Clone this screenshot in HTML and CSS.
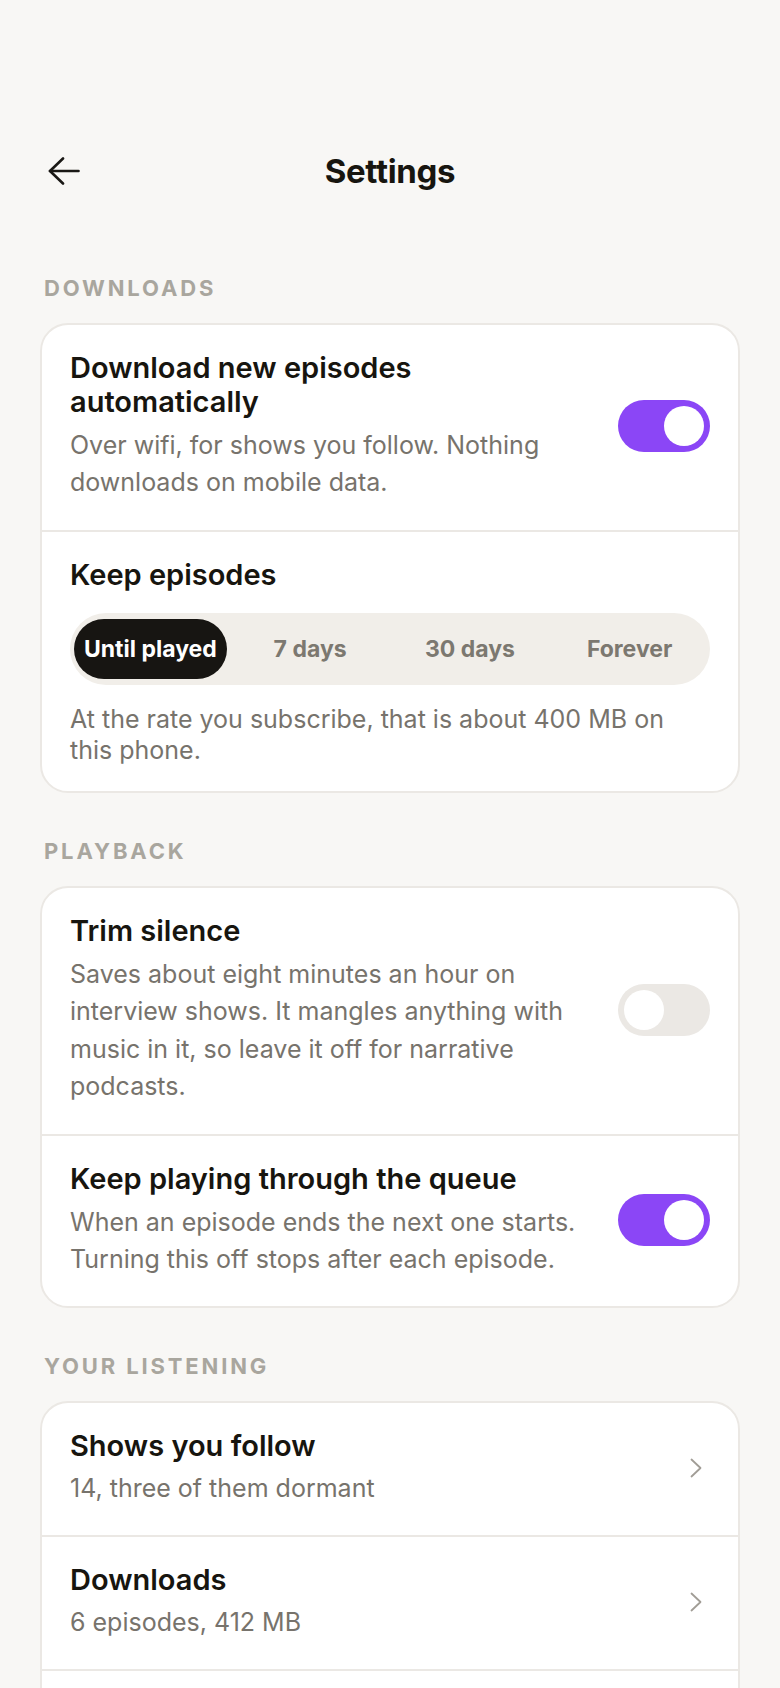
FILE: index.html
```html
<!DOCTYPE html>
<html lang="en">
<head>
<meta charset="utf-8">
<title>Settings</title>
<link rel="stylesheet" href="styles.css">
</head>
<body>
<div class="page">
  <header class="header">
    <button class="back" aria-label="Back">
      <svg width="32" height="28" viewBox="0 0 32 28" fill="none" stroke="currentColor" stroke-width="2.6" stroke-linecap="round" stroke-linejoin="round"><path d="M2 14H30.5"/><path d="M15 1.5L2 14l13 12.5"/></svg>
    </button>
    <h1 class="title">Settings</h1>
    <span></span>
  </header>

  <section class="section">
    <h2 class="section-label">Downloads</h2>
    <div class="card">
      <div class="row row-tall">
        <div class="row-text">
          <div class="row-title">Download new episodes automatically</div>
          <div class="row-desc">Over wifi, for shows you follow. Nothing downloads on mobile data.</div>
        </div>
        <div class="toggle on" role="switch" aria-checked="true"></div>
      </div>
      <div class="row row-stack">
        <div class="row-title">Keep episodes</div>
        <div class="seg">
          <div class="seg-item active">Until played</div>
          <div class="seg-item">7 days</div>
          <div class="seg-item">30 days</div>
          <div class="seg-item">Forever</div>
        </div>
        <p class="note">At the rate you subscribe, that is about 400 MB on this phone.</p>
      </div>
    </div>
  </section>

  <section class="section">
    <h2 class="section-label">Playback</h2>
    <div class="card">
      <div class="row row-tall">
        <div class="row-text">
          <div class="row-title">Trim silence</div>
          <div class="row-desc">Saves about eight minutes an hour on interview shows. It mangles anything with music in it, so leave it off for narrative podcasts.</div>
        </div>
        <div class="toggle" role="switch" aria-checked="false"></div>
      </div>
      <div class="row">
        <div class="row-text">
          <div class="row-title">Keep playing through the queue</div>
          <div class="row-desc">When an episode ends the next one starts. Turning this off stops after each episode.</div>
        </div>
        <div class="toggle on" role="switch" aria-checked="true"></div>
      </div>
    </div>
  </section>

  <section class="section">
    <h2 class="section-label">Your listening</h2>
    <div class="card">
      <div class="row">
        <div class="row-text">
          <div class="row-title">Shows you follow</div>
          <div class="row-desc">14, three of them dormant</div>
        </div>
        <svg class="chev" width="12" height="20" viewBox="0 0 12 20" fill="none" stroke="currentColor" stroke-width="1.8" stroke-linecap="round" stroke-linejoin="round"><path d="M1.5 1.5L10.5 10l-9 8.5"/></svg>
      </div>
      <div class="row">
        <div class="row-text">
          <div class="row-title">Downloads</div>
          <div class="row-desc">6 episodes, 412 MB</div>
        </div>
        <svg class="chev" width="12" height="20" viewBox="0 0 12 20" fill="none" stroke="currentColor" stroke-width="1.8" stroke-linecap="round" stroke-linejoin="round"><path d="M1.5 1.5L10.5 10l-9 8.5"/></svg>
      </div>
      <div class="row">
        <div class="row-text">
          <div class="row-title">Listening history</div>
          <div class="row-desc">Kept for 90 days</div>
        </div>
        <svg class="chev" width="12" height="20" viewBox="0 0 12 20" fill="none" stroke="currentColor" stroke-width="1.8" stroke-linecap="round" stroke-linejoin="round"><path d="M1.5 1.5L10.5 10l-9 8.5"/></svg>
      </div>
    </div>
  </section>
</div>
</body>
</html>
```

FILE: styles.css
```css
* { box-sizing: border-box; }

body {
  margin: 0;
  background: #f8f7f5;
  font-family: Inter, "Noto Sans", "Liberation Sans", sans-serif;
  color: #17150f;
}

.page {
  padding: 123px 40px 40px;
}

.header {
  display: grid;
  grid-template-columns: 48px 1fr 48px;
  align-items: center;
  height: 96px;
}

.back {
  width: 48px;
  height: 48px;
  display: flex;
  align-items: center;
  justify-content: center;
  border: 0;
  padding: 0;
  background: none;
  color: #1a1815;
}

.title {
  margin: 0;
  text-align: center;
  font-size: 33px;
  line-height: 40px;
  font-weight: 700;
  letter-spacing: -0.01em;
}

.section-label {
  margin: 44px 0 21px;
  padding-left: 4px;
  font-size: 22px;
  line-height: 28px;
  font-weight: 700;
  letter-spacing: 0.13em;
  text-transform: uppercase;
  color: #a9a69e;
}

.header + .section .section-label {
  margin-top: 55px;
}

.card {
  background: #fff;
  border: 2px solid #ebe8e4;
  border-radius: 28px;
  overflow: hidden;
}

.row {
  display: flex;
  align-items: center;
  gap: 32px;
  padding: 26px 28px 27px;
}

.row + .row {
  border-top: 2px solid #ebe8e4;
}

.row-tall {
  padding-bottom: 28.5px;
}

.row-stack {
  display: block;
  padding-bottom: 25px;
}

.row-text {
  flex: 1;
  min-width: 0;
}

.row-title {
  font-size: 29px;
  line-height: 34px;
  font-weight: 600;
}

.row-desc {
  margin-top: 7.5px;
  font-size: 25px;
  line-height: 37.5px;
  color: #77736c;
}

.toggle {
  flex: none;
  position: relative;
  width: 92px;
  height: 52px;
  border-radius: 26px;
  background: #ebe8e4;
}

.toggle::after {
  content: "";
  position: absolute;
  top: 6px;
  left: 6px;
  width: 40px;
  height: 40px;
  border-radius: 50%;
  background: #fff;
}

.toggle.on {
  background: #8b46f6;
}

.toggle.on::after {
  left: 46px;
}

.seg {
  display: flex;
  gap: 7px;
  margin-top: 21px;
  padding: 6px 4px;
  background: #f1eee9;
  border-radius: 36px;
}

.seg-item {
  flex: 1;
  height: 60px;
  display: flex;
  align-items: center;
  justify-content: center;
  border-radius: 30px;
  font-size: 23px;
  font-weight: 700;
  color: #7c7870;
}

.seg-item.active {
  background: #171512;
  color: #fff;
}

.note {
  margin: 19px 0 0;
  max-width: 620px;
  font-size: 25px;
  line-height: 31px;
  color: #77736c;
}

.chev {
  flex: none;
  margin-right: 8px;
  color: #a19d96;
}
```
